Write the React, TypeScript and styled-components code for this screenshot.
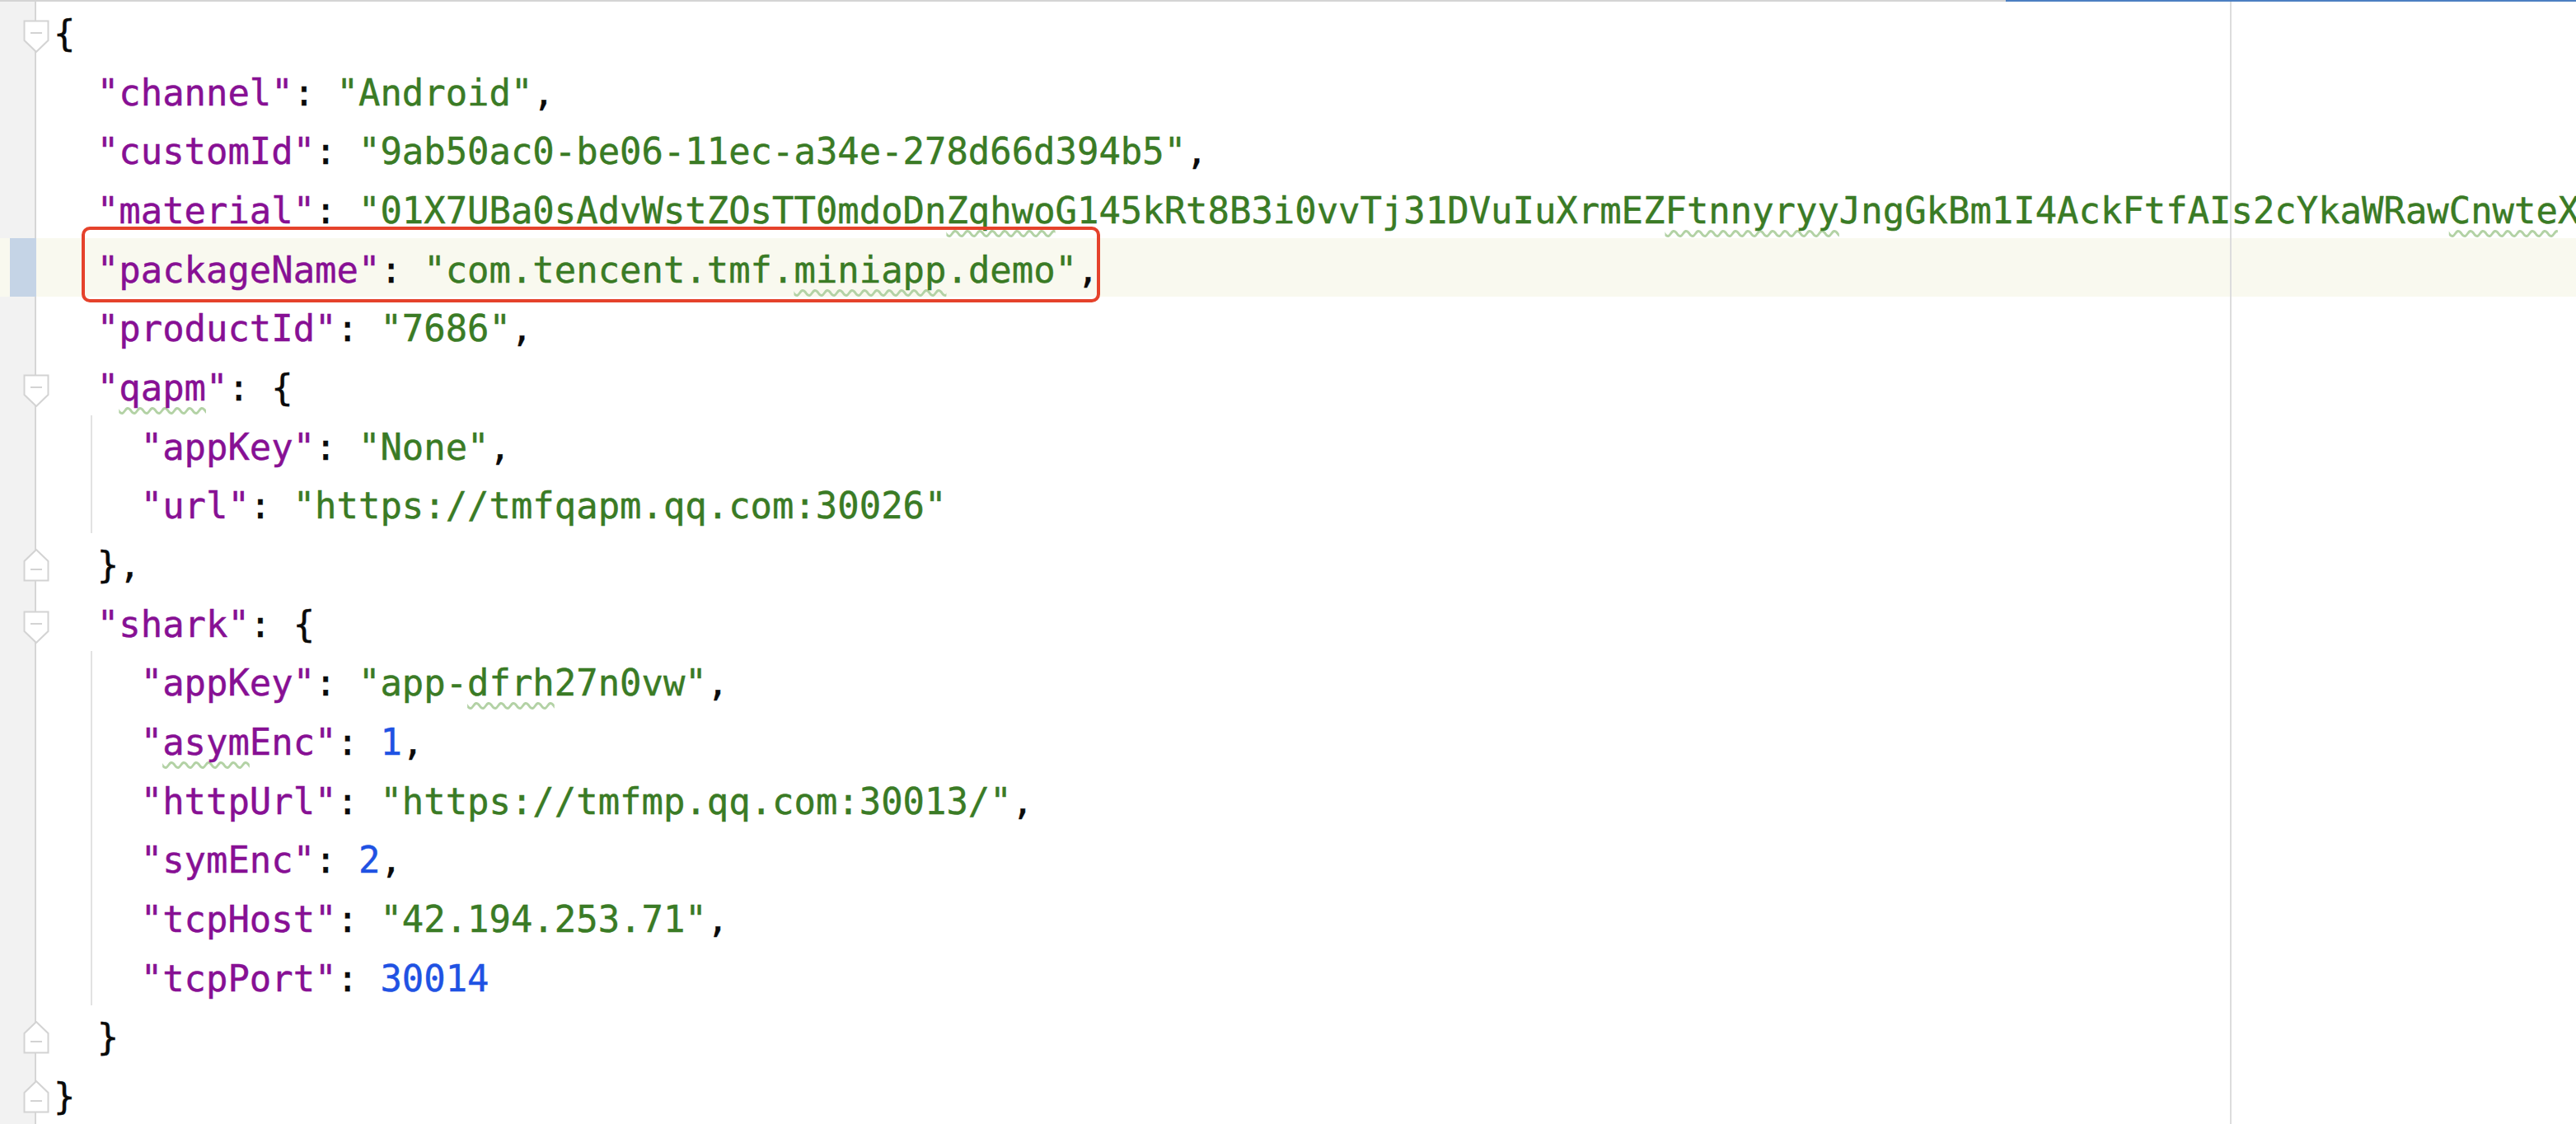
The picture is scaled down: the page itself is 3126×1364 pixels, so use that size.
import styled, { createGlobalStyle } from "styled-components";

type Kind = "k" | "s" | "n" | "p";

type Token = {
  kind: Kind;
  text: string;
  typo?: boolean;
};

type Fold = "open" | "close";

type LineSpec = {
  tokens: Token[];
  fold?: Fold;
  guide?: boolean;
  current?: boolean;
};

const t = (kind: Kind, text: string, typo = false): Token => ({ kind, text, typo });

const LINES: LineSpec[] = [
  { tokens: [t("p", "{")], fold: "open" },
  { tokens: [t("p", "  "), t("k", '"channel"'), t("p", ": "), t("s", '"Android"'), t("p", ",")] },
  {
    tokens: [
      t("p", "  "),
      t("k", '"customId"'),
      t("p", ": "),
      t("s", '"9ab50ac0-be06-11ec-a34e-278d66d394b5"'),
      t("p", ","),
    ],
  },
  {
    tokens: [
      t("p", "  "),
      t("k", '"material"'),
      t("p", ": "),
      t("s", '"01X7UBa0sAdvWstZOsTT0mdoDn'),
      t("s", "Zqhwo", true),
      t("s", "G145kRt8B3i0vvTj31DVuIuXrmEZ"),
      t("s", "Ftnnyryy", true),
      t("s", "JngGkBm1I4AckFtfAIs2cYkaWRaw"),
      t("s", "Cnwte", true),
      t("s", "X"),
    ],
  },
  {
    tokens: [
      t("p", "  "),
      t("k", '"packageName"'),
      t("p", ": "),
      t("s", '"com.tencent.tmf.'),
      t("s", "miniapp", true),
      t("s", '.demo"'),
      t("p", ","),
    ],
    current: true,
  },
  { tokens: [t("p", "  "), t("k", '"productId"'), t("p", ": "), t("s", '"7686"'), t("p", ",")] },
  {
    tokens: [t("p", "  "), t("k", '"'), t("k", "qapm", true), t("k", '"'), t("p", ": {")],
    fold: "open",
  },
  {
    tokens: [t("p", "    "), t("k", '"appKey"'), t("p", ": "), t("s", '"None"'), t("p", ",")],
    guide: true,
  },
  {
    tokens: [t("p", "    "), t("k", '"url"'), t("p", ": "), t("s", '"https://tmfqapm.qq.com:30026"')],
    guide: true,
  },
  { tokens: [t("p", "  },")], fold: "close" },
  { tokens: [t("p", "  "), t("k", '"shark"'), t("p", ": {")], fold: "open" },
  {
    tokens: [
      t("p", "    "),
      t("k", '"appKey"'),
      t("p", ": "),
      t("s", '"app-'),
      t("s", "dfrh", true),
      t("s", '27n0vw"'),
      t("p", ","),
    ],
    guide: true,
  },
  {
    tokens: [
      t("p", "    "),
      t("k", '"'),
      t("k", "asym", true),
      t("k", 'Enc"'),
      t("p", ": "),
      t("n", "1"),
      t("p", ","),
    ],
    guide: true,
  },
  {
    tokens: [
      t("p", "    "),
      t("k", '"httpUrl"'),
      t("p", ": "),
      t("s", '"https://tmfmp.qq.com:30013/"'),
      t("p", ","),
    ],
    guide: true,
  },
  {
    tokens: [t("p", "    "), t("k", '"symEnc"'), t("p", ": "), t("n", "2"), t("p", ",")],
    guide: true,
  },
  {
    tokens: [t("p", "    "), t("k", '"tcpHost"'), t("p", ": "), t("s", '"42.194.253.71"'), t("p", ",")],
    guide: true,
  },
  {
    tokens: [t("p", "    "), t("k", '"tcpPort"'), t("p", ": "), t("n", "30014")],
    guide: true,
  },
  { tokens: [t("p", "  }")], fold: "close" },
  { tokens: [t("p", "}")], fold: "close" },
];

const COLORS: Record<Kind, string> = {
  k: "#871094",
  s: "#3a7b25",
  n: "#1f52e3",
  p: "#0a0a0a",
};

const GlobalStyle = createGlobalStyle`
  html, body {
    margin: 0;
    padding: 0;
    background: #ffffff;
    overflow: hidden;
  }
`;

const Window = styled.div`
  width: 3126px;
  height: 1364px;
  display: flex;
  flex-direction: column;
  overflow: hidden;
  background: #ffffff;
`;

const TabStrip = styled.div`
  display: flex;
  height: 2px;
  flex-shrink: 0;
`;

const TabRule = styled.div<{ $active?: boolean }>`
  flex: ${(p) => (p.$active ? "0 0 692px" : "1")};
  background: ${(p) => (p.$active ? "#4c7fc2" : "#d4d4d4")};
`;

const Editor = styled.div`
  display: flex;
  flex-direction: column;
`;

const Row = styled.div`
  display: grid;
  grid-template-columns: 44px 1fr;
  height: 71.68px;
`;

const Gutter = styled.div<{ $current?: boolean }>`
  position: relative;
  box-sizing: border-box;
  border-right: 2px solid ${(p) => (p.$current ? "#c5d4e6" : "#d6d6d6")};
  background: ${(p) =>
    p.$current
      ? "linear-gradient(to right, #f9f9ef 0 12px, #c5d4e6 12px 100%)"
      : "#f2f2f2"};
`;

const FoldIcon = styled.svg<{ $fold: Fold }>`
  position: absolute;
  left: 28px;
  top: ${(p) => (p.$fold === "open" ? "22px" : "19px")};
  width: 32px;
  height: 40px;
  z-index: 2;
`;

const Code = styled.div<{ $guide?: boolean; $current?: boolean }>`
  position: relative;
  box-sizing: border-box;
  padding: 6px 0 0 21px;
  white-space: pre;
  overflow: visible;
  font-family: "DejaVu Sans Mono", "Liberation Mono", monospace;
  font-size: 43.9px;
  line-height: 65.68px;
  -webkit-text-stroke: 0.45px currentColor;
  background: ${(p) => (p.$guide ? "linear-gradient(#e2e2e2, #e2e2e2) 66px 0 / 2px 100% no-repeat," : "")}
    linear-gradient(#dcdcdc, #dcdcdc) 2662px 0 / 2px 100% no-repeat,
    ${(p) => (p.$current ? "#f9f9ef" : "#ffffff")};
`;

const Tok = styled.span<{ $kind: Kind; $typo?: boolean }>`
  color: ${(p) => COLORS[p.$kind]};
  -webkit-text-stroke: 0.45px ${(p) => COLORS[p.$kind]};
  text-decoration: ${(p) => (p.$typo ? "underline wavy #b3d2a5" : "none")};
  text-decoration-thickness: 3px;
  text-decoration-skip-ink: none;
  text-underline-offset: 8px;
`;

const Callout = styled.div`
  position: absolute;
  z-index: 5;
  left: 55px;
  top: -14px;
  bottom: -7px;
  width: 1236px;
  box-sizing: border-box;
  border: 4px solid #e5422b;
  border-radius: 10px;
  pointer-events: none;
`;

const FoldMarker = ({ fold }: { fold: Fold }) => (
  <FoldIcon $fold={fold} viewBox="0 0 32 40">
    {fold === "open" ? (
      <>
        <path d="M1.5 1.5 H30.5 V25 L16 39 L1.5 25 Z" fill="#ffffff" stroke="#d3d3d3" strokeWidth="2" />
        <line x1="9" y1="16" x2="23" y2="16" stroke="#d3d3d3" strokeWidth="2" />
      </>
    ) : (
      <>
        <path d="M1.5 38.5 H30.5 V15 L16 1 L1.5 15 Z" fill="#ffffff" stroke="#d3d3d3" strokeWidth="2" />
        <line x1="9" y1="25" x2="23" y2="25" stroke="#d3d3d3" strokeWidth="2" />
      </>
    )}
  </FoldIcon>
);

const App = () => {
  return (
    <Window>
      <GlobalStyle />
      <TabStrip>
        <TabRule />
        <TabRule $active />
      </TabStrip>
      <Editor>
        {LINES.map((line, i) => (
          <Row key={i}>
            <Gutter $current={line.current}>
              {line.fold && <FoldMarker fold={line.fold} />}
            </Gutter>
            <Code $guide={line.guide} $current={line.current}>
              {line.tokens.map((tok, j) => (
                <Tok key={j} $kind={tok.kind} $typo={tok.typo}>
                  {tok.text}
                </Tok>
              ))}
              {line.current && <Callout />}
            </Code>
          </Row>
        ))}
      </Editor>
    </Window>
  );
};

export default App;
